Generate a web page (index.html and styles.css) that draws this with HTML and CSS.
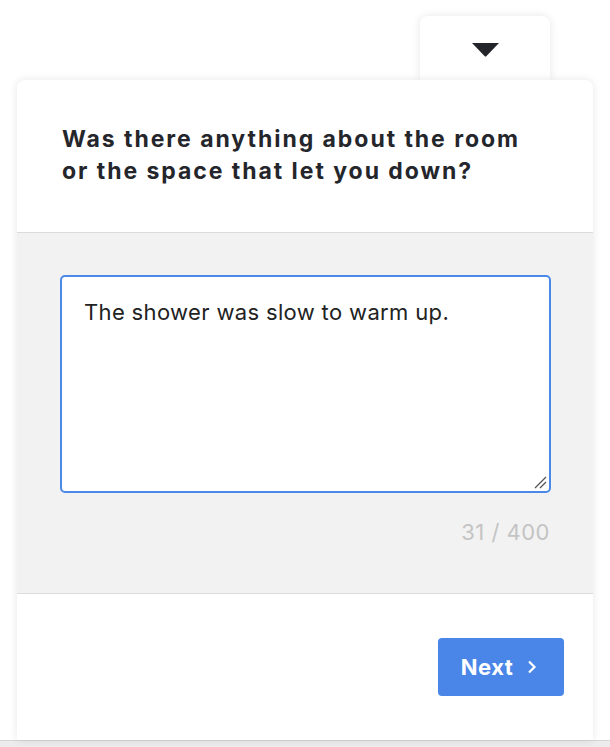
FILE: index.html
```html
<!DOCTYPE html>
<html>
<head>
<meta charset="utf-8">
<link rel="stylesheet" href="styles.css">
</head>
<body>
<div class="page">
  <div class="tab-row">
    <div class="tab">
      <svg class="caret" width="29" height="15" viewBox="0 0 29 15"><path d="M1 1 H28 L15.5 14 Q14.5 15 13.5 14 Z" fill="#23252a"/></svg>
    </div>
  </div>
  <div class="card">
    <div class="card-head">
      <h1 class="question">Was there anything about the room or the space that let you down?</h1>
    </div>
    <div class="card-body">
      <div class="field">
        <div class="textarea">The shower was slow to warm up.
          <svg class="grip" width="14" height="14" viewBox="0 0 14 14"><path d="M2 13 L13 2 M7 13 L13 7" stroke="#555" stroke-width="1.3"/></svg>
        </div>
      </div>
      <div class="counter">31 / 400</div>
    </div>
    <div class="card-foot">
      <button class="next">Next <svg width="11" height="16" viewBox="0 0 11 16"><path d="M3 2.5 L8.5 8 L3 13.5" fill="none" stroke="#fff" stroke-width="2.2"/></svg></button>
    </div>
  </div>
</div>
<div class="bottom-strip"></div>
</body>
</html>
```

FILE: styles.css
```css
html, body {
  margin: 0;
  padding: 0;
  background: #fff;
  height: 747px;
  overflow: hidden;
  font-family: Inter, "Liberation Sans", sans-serif;
}
.page {
  padding: 16px 17px 0 17px;
  height: 724px;
}
.tab-row {
  display: flex;
  justify-content: flex-end;
  padding-right: 43px;
}
.tab {
  width: 130px;
  height: 64px;
  background: #fff;
  border-radius: 8px 8px 0 0;
  box-shadow: 0 0 8px rgba(0,0,0,0.10);
  display: flex;
  justify-content: center;
  padding-top: 26px;
  box-sizing: border-box;
  position: relative;
  z-index: 0;
}
.caret { display: block; }
.card {
  position: relative;
  z-index: 1;
  background: #fff;
  border-radius: 8px 8px 0 0;
  box-shadow: 0 0 8px rgba(0,0,0,0.10);
  height: 660px;
  display: flex;
  flex-direction: column;
}
.card-head {
  height: 153px;
  padding: 43px 50px 0 45px;
  box-sizing: border-box;
  border-bottom: 1px solid #dcdcdc;
}
.question {
  margin: 0;
  font-size: 23px;
  line-height: 32px;
  font-weight: 700;
  color: #24262b;
  letter-spacing: 1.95px;
}
.card-body {
  background: #f2f2f2;
  height: 361px;
  box-sizing: border-box;
  padding: 42px 42px 0 43px;
  border-bottom: 1px solid #dcdcdc;
}
.textarea {
  position: relative;
  height: 218px;
  box-sizing: border-box;
  border: 2px solid #4a89e8;
  border-radius: 5px;
  background: #fff;
  padding: 21px 22px;
  font-size: 22px;
  line-height: 28px;
  letter-spacing: 0.35px;
  color: #222;
}
.grip {
  position: absolute;
  right: 2px;
  bottom: 2px;
}
.counter {
  text-align: right;
  margin-top: 26px;
  padding-right: 1px;
  font-size: 22px;
  letter-spacing: 0.5px;
  color: #c4c4c4;
}
.card-foot {
  flex: 1;
  display: flex;
  justify-content: flex-end;
  align-items: flex-start;
  padding: 44px 29px 0 0;
}
.next {
  width: 126px;
  height: 58px;
  border: none;
  border-radius: 4px;
  background: #4a86e8;
  color: #fff;
  font-family: Inter, "Liberation Sans", sans-serif;
  font-size: 22px;
  letter-spacing: 0.5px;
  font-weight: 700;
  display: flex;
  align-items: center;
  justify-content: center;
  gap: 13px;
  padding: 0 4px 0 0;
}
.bottom-strip {
  position: absolute;
  left: 0;
  right: 0;
  top: 740px;
  height: 7px;
  background: #ececec;
  border-top: 1px solid #d6d6d6;
}
```
